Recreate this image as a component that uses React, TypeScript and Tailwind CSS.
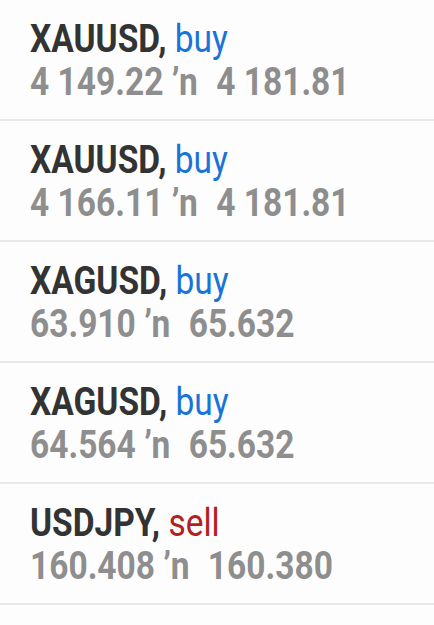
import React from "react";

interface Position {
  symbol: string;
  side: "buy" | "sell";
  open: string;
  current: string;
}

const positions: Position[] = [
  { symbol: "XAUUSD", side: "buy", open: "4 149.22", current: "4 181.81" },
  { symbol: "XAUUSD", side: "buy", open: "4 166.11", current: "4 181.81" },
  { symbol: "XAGUSD", side: "buy", open: "63.910", current: "65.632" },
  { symbol: "XAGUSD", side: "buy", open: "64.564", current: "65.632" },
  { symbol: "USDJPY", side: "sell", open: "160.408", current: "160.380" },
];

function PositionRow({ symbol, side, open, current }: Position) {
  return (
    <div className="h-[121px] border-b-2 border-[#e8e8e8] pl-[30px] pt-[17px]">
      <div className="origin-left scale-x-[0.87] whitespace-pre text-[38.5px] leading-[43px]">
        <div>
          <span className="font-bold text-[#333333]">{symbol}, </span>
          <span
            className={
              side === "buy"
                ? "font-normal text-[#1a73d6]"
                : "font-normal text-[#b3201f]"
            }
          >
            {side}
          </span>
        </div>
        <div className="font-bold text-[#8e8e8e]">
          {open} ’n  <span className="ml-[2px]">{current}</span>
        </div>
      </div>
    </div>
  );
}

export default function App() {
  return (
    <div
      className="min-h-[625px] w-[434px] overflow-hidden bg-[#fdfdfd]"
      style={{ fontFamily: "Roboto, 'Noto Sans', sans-serif" }}
    >
      {positions.map((p, i) => (
        <PositionRow key={i} {...p} />
      ))}
    </div>
  );
}
